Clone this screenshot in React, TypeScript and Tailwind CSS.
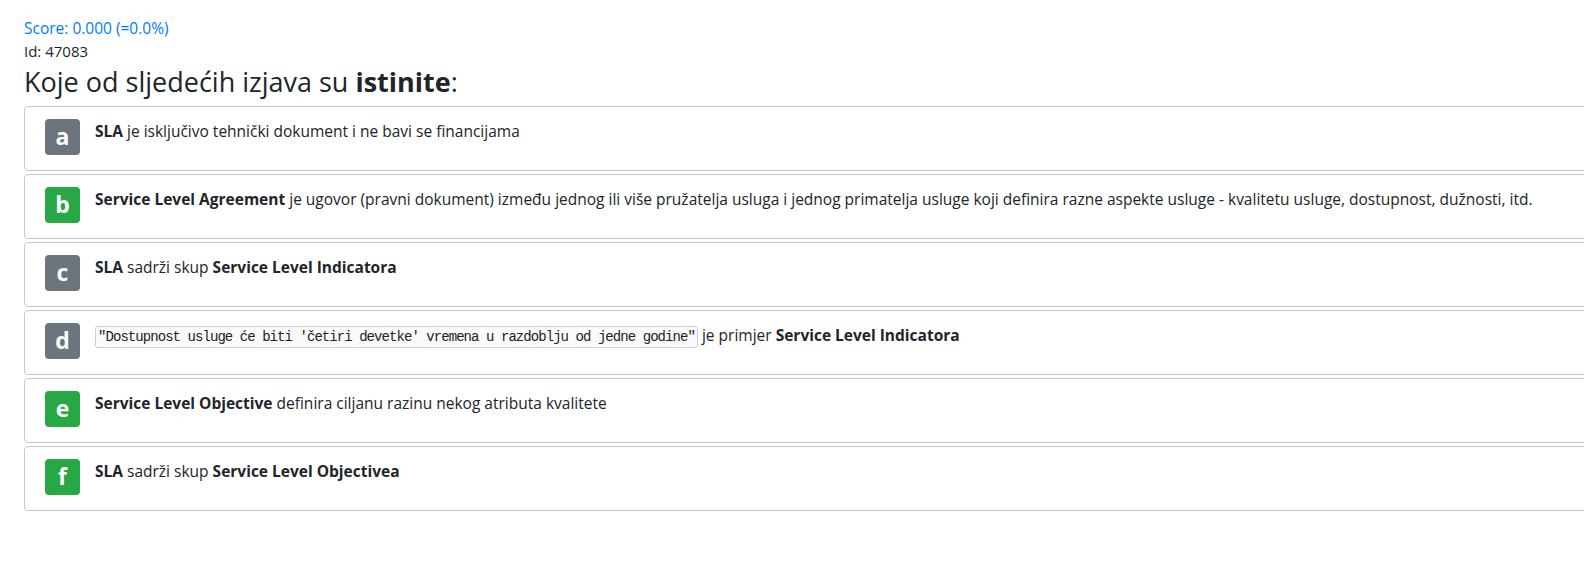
import React from "react";

type Answer = {
  letter: string;
  correct: boolean;
  body: React.ReactNode;
};

const answers: Answer[] = [
  {
    letter: "a",
    correct: false,
    body: (
      <>
        <b>SLA</b> je isključivo tehnički dokument i ne bavi se financijama
      </>
    ),
  },
  {
    letter: "b",
    correct: true,
    body: (
      <>
        <b>Service Level Agreement</b> je ugovor (pravni dokument) između jednog ili više pružatelja usluga i jednog
        primatelja usluge koji definira razne aspekte usluge - kvalitetu usluge, dostupnost, dužnosti, itd.
      </>
    ),
  },
  {
    letter: "c",
    correct: false,
    body: (
      <>
        <b>SLA</b> sadrži skup <b>Service Level Indicatora</b>
      </>
    ),
  },
  {
    letter: "d",
    correct: false,
    body: (
      <>
        <code className="rounded-[3px] border border-[#cfcfcf] bg-[#fafafa] px-[2px] py-[2px] font-['Liberation_Mono',monospace] text-[14px] tracking-[-0.94px] text-[#222]">
          "Dostupnost usluge će biti 'četiri devetke' vremena u razdoblju od jedne godine"
        </code>{" "}
        je primjer <b>Service Level Indicatora</b>
      </>
    ),
  },
  {
    letter: "e",
    correct: true,
    body: (
      <>
        <b>Service Level Objective</b> definira ciljanu razinu nekog atributa kvalitete
      </>
    ),
  },
  {
    letter: "f",
    correct: true,
    body: (
      <>
        <b>SLA</b> sadrži skup <b>Service Level Objectivea</b>
      </>
    ),
  },
];

const App = () => {
  return (
    <div className="min-h-[583px] w-full overflow-hidden bg-white font-['Open_Sans',sans-serif] text-[#212529]">
      <div className="pl-[24px] pt-[16px]">
        <div className="text-[15.5px] leading-[24px] text-[#007bff]">Score: 0.000 (=0.0%)</div>
        <div className="text-[15px] leading-[22px]">Id: 47083</div>
        <h3 className="mb-[4px] whitespace-nowrap text-[27px] leading-[40px]">
          Koje od sljedećih izjava su <b>istinite</b>:
        </h3>
        <div className="w-[1600px]">
          {answers.map((a) => (
            <div
              key={`answer-${a.letter}`}
              className="mb-[3px] flex h-[65px] items-start rounded-[4px] border border-[#c8c8c8] pl-[20px] pt-[12px]"
            >
              <div
                className={
                  "flex h-[36px] w-[35px] shrink-0 items-center justify-center rounded-[4px] pb-[2px] text-[23px] font-bold text-white " +
                  (a.correct ? "bg-[#28a745]" : "bg-[#6c757d]")
                }
              >
                {a.letter}
              </div>
              <div className="whitespace-nowrap pl-[15px] text-[15.5px] leading-[24px]">{a.body}</div>
            </div>
          ))}
        </div>
      </div>
    </div>
  );
};

export default App;
